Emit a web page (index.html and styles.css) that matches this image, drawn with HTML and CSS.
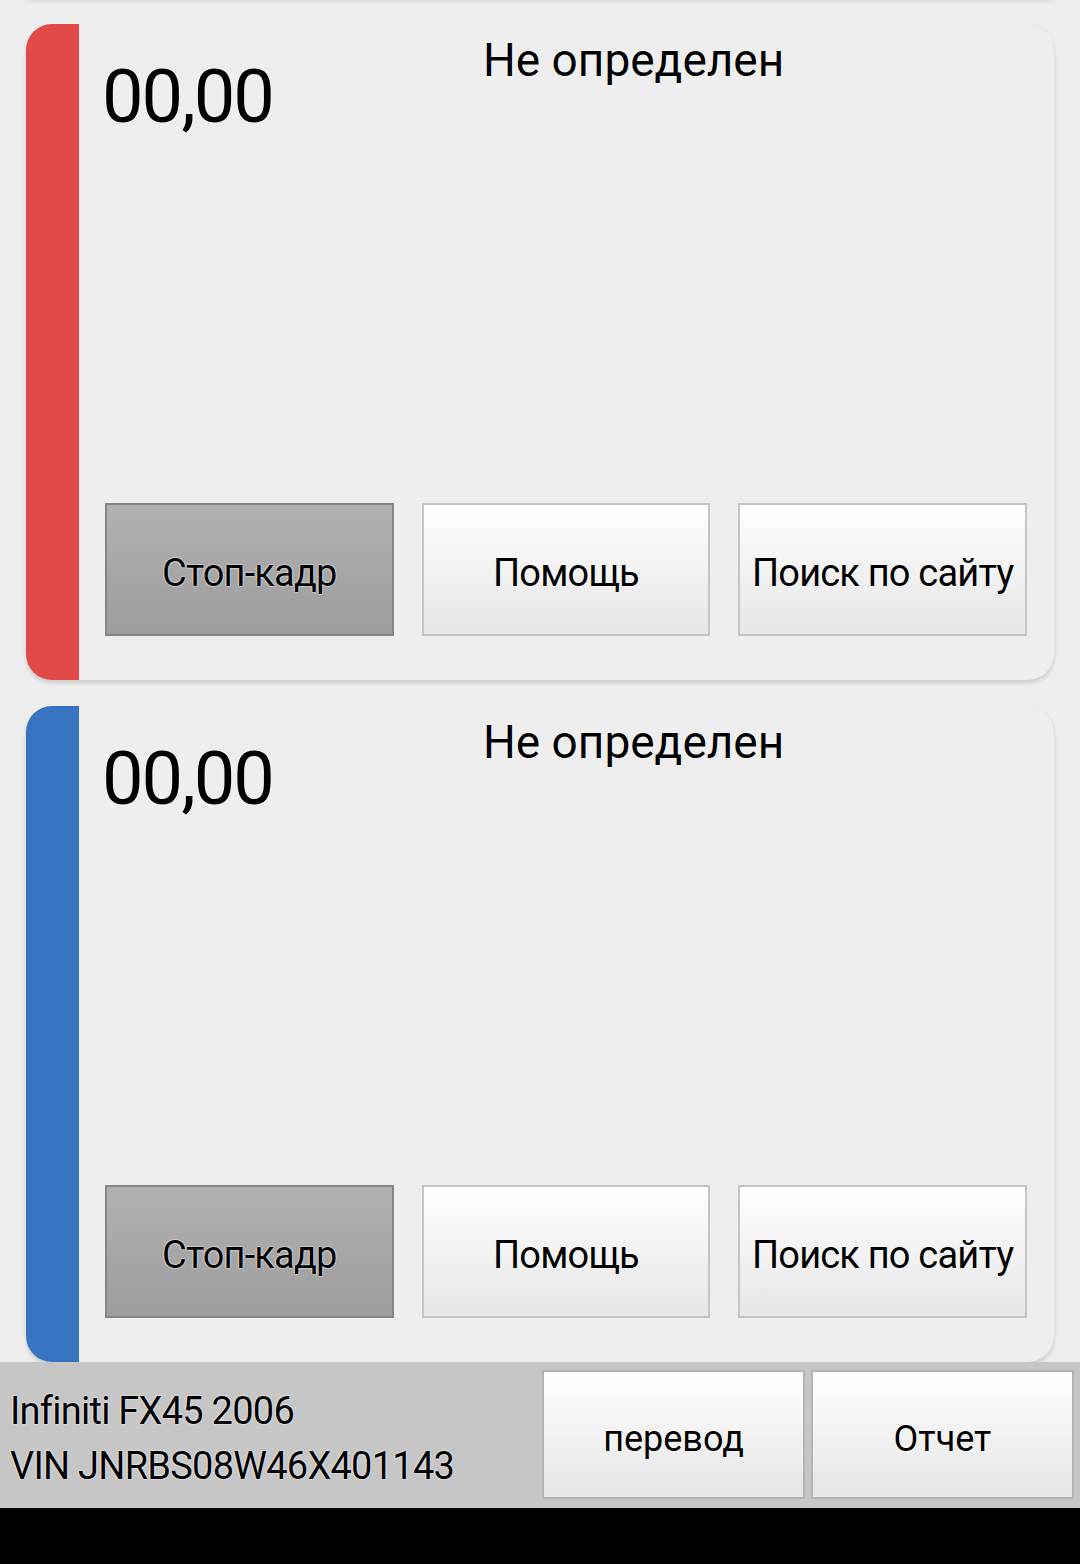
FILE: index.html
```html
<!DOCTYPE html>
<html lang="ru">
<head>
<meta charset="utf-8">
<title>Диагностика</title>
<link rel="stylesheet" href="styles.css">
</head>
<body>
<div class="screen">
  <div class="list">
    <div class="prev-edge"></div>
    <div class="card">
      <div class="bar bar-red"></div>
      <div class="content">
        <div class="top">
          <div class="amount">00,00</div>
          <div class="status">Не определен</div>
        </div>
        <div class="actions">
          <button class="btn btn-dark">Стоп-кадр</button>
          <button class="btn">Помощь</button>
          <button class="btn">Поиск по сайту</button>
        </div>
      </div>
    </div>
    <div class="card">
      <div class="bar bar-blue"></div>
      <div class="content">
        <div class="top">
          <div class="amount">00,00</div>
          <div class="status">Не определен</div>
        </div>
        <div class="actions">
          <button class="btn btn-dark">Стоп-кадр</button>
          <button class="btn">Помощь</button>
          <button class="btn">Поиск по сайту</button>
        </div>
      </div>
    </div>
  </div>
  <div class="footer">
    <div class="info">
      <div class="info-line">Infiniti FX45 2006</div>
      <div class="info-line">VIN JNRBS08W46X401143</div>
    </div>
    <button class="btn btn-foot">перевод</button>
    <button class="btn btn-foot">Отчет</button>
  </div>
  <div class="navbar"></div>
</div>
</body>
</html>
```
FILE: styles.css
```css
* { box-sizing: border-box; }
html, body {
  margin: 0;
  padding: 0;
  background: #eeeeee;
}
body {
  width: 1080px;
  height: 1564px;
  overflow: hidden;
  font-family: Roboto, "Noto Sans", sans-serif;
  color: #000;
}
.screen {
  display: flex;
  flex-direction: column;
  height: 1564px;
}
.list {
  flex: 1;
  overflow: hidden;
  display: flex;
  flex-direction: column;
  gap: 26px;
  padding: 0 26px;
}
.prev-edge {
  flex: 0 0 2px;
  margin-top: -4px;
  background: #e8e8e8;
  border-radius: 0 0 26px 26px;
  box-shadow: 0 2px 4px 1px rgba(0,0,0,0.1);
}
.card {
  flex: 0 0 656px;
  display: flex;
  border-radius: 26px;
  overflow: hidden;
  background: #eeeeee;
  box-shadow: 0 3px 4px rgba(0,0,0,0.14), 0 0 1px rgba(0,0,0,0.06);
}
.bar { width: 53px; flex: 0 0 53px; }
.bar-red { background: #e24a4a; }
.bar-blue { background: #3874c2; }
.content {
  flex: 1;
  display: flex;
  flex-direction: column;
  padding: 0 27px 44px 26px;
}
.top {
  display: flex;
  align-items: flex-start;
}
.amount {
  width: 381px;
  margin-left: -3px;
  margin-top: 36px;
  font-size: 74px;
  line-height: 74px;
  letter-spacing: -2px;
  text-shadow: 0 0 2px #fff, 0 0 1px #fff;
}
.status {
  margin-top: 12px;
  font-size: 46px;
  line-height: 48px;
  text-shadow: 0 0 2px #fff, 0 0 1px #fff;
}
.actions {
  margin-top: auto;
  display: grid;
  grid-template-columns: repeat(3, 1fr);
  gap: 28px;
  height: 133px;
}
.btn {
  font-family: Roboto, "Noto Sans", sans-serif;
  font-size: 38px;
  letter-spacing: -0.8px;
  color: #000;
  border: 2px solid #c4c4c4;
  border-radius: 0;
  background: linear-gradient(#ffffff, #e6e6e6);
  padding: 6px 0 0 0;
  text-shadow: 0 0 2px #fff, 0 0 1px #fff;
  white-space: nowrap;
}
.btn-dark {
  border-color: #858585;
  background: linear-gradient(#b1b1b1, #9d9d9d);
}
.footer {
  flex: 0 0 146px;
  background: #c6c6c6;
  display: flex;
  gap: 6px;
  padding: 8px 6px 9px 0;
}
.info {
  flex: 1;
  padding-left: 10px;
  padding-top: 14px;
}
.info-line {
  font-size: 38px;
  line-height: 55px;
  letter-spacing: -0.75px;
  text-shadow: 0 0 2px #fff, 0 0 1px #fff;
}
.btn-foot {
  flex: 0 0 263px;
  font-size: 36px;
  letter-spacing: 0;
  padding-top: 8px;
  border-color: #b4b4b4;
}
.navbar {
  flex: 0 0 56px;
  background: #000;
}
```
